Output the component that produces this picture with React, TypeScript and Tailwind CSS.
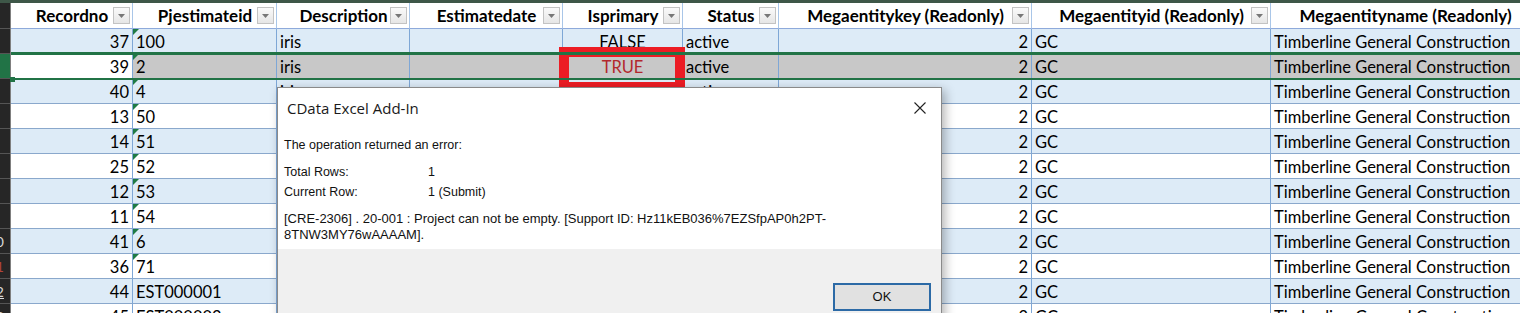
import React from 'react';

type Col = { title: string; w: string; align: string; btn: boolean };

const COLS: Col[] = [
  { title: 'Recordno', w: 'w-[122px]', align: 'justify-end pr-[3px]', btn: true },
  { title: 'Pjestimateid', w: 'w-[144px]', align: 'justify-start pl-[3px]', btn: true },
  { title: 'Description', w: 'w-[133px]', align: 'justify-start pl-[3px]', btn: true },
  { title: 'Estimatedate', w: 'w-[153px]', align: 'justify-start pl-[3px]', btn: true },
  { title: 'Isprimary', w: 'w-[120px]', align: 'justify-center', btn: true },
  { title: 'Status', w: 'w-[96px]', align: 'justify-start pl-[3px]', btn: true },
  { title: 'Megaentitykey (Readonly)', w: 'w-[253px]', align: 'justify-end pr-[3px]', btn: true },
  { title: 'Megaentityid (Readonly)', w: 'w-[239px]', align: 'justify-start pl-[3px]', btn: true },
  { title: 'Megaentityname (Readonly)', w: 'w-[270px]', align: 'justify-start pl-[3px]', btn: false },
];

const NAME = 'Timberline General Construction';
const ids = [
  ['37', '100'], ['39', '2'], ['40', '4'], ['13', '50'], ['14', '51'], ['25', '52'],
  ['12', '53'], ['11', '54'], ['41', '6'], ['36', '71'], ['44', 'EST000001'], ['45', 'EST000002'],
];
const ROWS = ids.map(([r, p], i) => [r, p, 'iris', '', i === 1 ? 'TRUE' : 'FALSE', 'active', '2', 'GC', NAME]);

function Caret() {
  return (
    <div className="w-[17px] h-[17px] shrink-0 flex items-center justify-center border border-[#c3c3c3] bg-gradient-to-b from-[#fafafa] to-[#e6e6e6]">
      <svg width="7" height="4" viewBox="0 0 7 4"><polygon points="0,0 7,0 3.5,4" fill="#777" /></svg>
    </div>
  );
}

function StripCell({ n, sel }: { n: number; sel: boolean }) {
  const color = n === 11 ? 'text-[#b0453a]' : 'text-[#d8d8d8]';
  return (
    <div className={`h-[25px] overflow-hidden border-b border-[#555] flex items-center ${sel ? 'bg-[#217346]' : ''}`}>
      {n >= 10 && (
        <div className={`-ml-[22px] w-[26px] shrink-0 text-right text-[14px] ${color} ${n === 12 ? 'underline' : ''}`}>{n}</div>
      )}
    </div>
  );
}

export default function App() {
  return (
    <div className="relative w-[1520px] h-[313px] overflow-hidden bg-white text-black font-['Lato',sans-serif]">
      <div className="h-[3px] bg-[#3e5748]" />
      <div className="flex">
        <div className="w-[11px] shrink-0 bg-[#262626] border-r border-[#7f7f7f]">
          <div className="h-[26px] border-b border-[#555]" />
          {ROWS.map((_, i) => <StripCell key={i} n={i + 2} sel={i === 1} />)}
        </div>
        <div className="flex flex-col">
          <div className="flex h-[26px]">
            {COLS.map((c, i) => (
              <div key={i} className={`${c.w} shrink-0 flex items-center border-r border-b border-r-[#a9c6e8] border-b-[#8eaadb] bg-white`}>
                <div className="w-[20px] shrink-0" />
                <div className="flex-1 text-center font-bold text-[17px] leading-[20px] pt-[1px] whitespace-nowrap">{c.title}</div>
                {c.btn ? <Caret /> : <div className="w-[20px] shrink-0" />}
                {c.btn && <div className="w-[2px] shrink-0" />}
              </div>
            ))}
          </div>
          {ROWS.map((row, ri) => {
            const sel = ri === 1;
            const band = ri % 2 === 0 ? 'bg-[#ddebf7]' : 'bg-white';
            return (
              <div key={ri} className="relative flex h-[25px]">
                {COLS.map((c, ci) => {
                  const bg = sel ? (ci === 0 ? 'bg-white' : 'bg-[#c8c8c8]') : band;
                  const txt = ci === 4 && row[ci] === 'TRUE' ? 'text-[#b3282d]' : '';
                  return (
                    <div key={ci} className={`${c.w} shrink-0 relative flex items-center pt-[3px] overflow-hidden whitespace-nowrap text-[16.5px] border-r border-b border-r-[#7ea7d6] border-b-[#8aa8cc] ${c.align} ${bg} ${txt}`}>
                      {ci === 1 && /^\d+$/.test(row[1]) && (
                        <svg className="absolute left-0 top-0" width="6" height="6" viewBox="0 0 6 6"><polygon points="0,0 6,0 0,6" fill="#1e7a45" /></svg>
                      )}
                      {row[ci]}
                    </div>
                  );
                })}
                {sel && (
                  <>
                    <div className="absolute z-10 left-0 right-0 -top-[2px] h-[3px] bg-[#217346]" />
                    <div className="absolute z-10 left-[4px] right-0 -bottom-[1px] h-[2px] bg-[#217346]" />
                    <div className="absolute z-10 -left-[1px] -bottom-[3px] w-[5px] h-[5px] bg-[#217346]" />
                  </>
                )}
              </div>
            );
          })}
        </div>
      </div>

      {/* red annotation */}
      <div className="absolute left-[559px] top-[47px] w-[126px] h-[45px] border-[10px] border-[#ec1c24]" />

      {/* dialog */}
      <div className="absolute left-[277px] top-[87px] w-[665px] h-[250px] bg-white border border-[#8a8a8a] shadow-[3px_3px_10px_rgba(0,0,0,0.3)] flex flex-col">
        <div className="h-[40px] flex items-center justify-between pl-[9px] pr-[15px]">
          <span className="font-['Open_Sans',sans-serif] text-[15px] text-[#1a1a1a]">CData Excel Add-In</span>
          <svg width="12" height="12" viewBox="0 0 12 12"><path d="M0.5 0.5 L11.5 11.5 M11.5 0.5 L0.5 11.5" stroke="#222" strokeWidth="1.1" /></svg>
        </div>
        <div className="px-[6px] pb-[6px] font-['Liberation_Sans',sans-serif] text-[12.5px] text-[#111]">
          <p className="mt-[9px] leading-[16px]">The operation returned an error:</p>
          <div className="mt-[9px] grid grid-cols-[144px_1fr]">
            <div className="h-[20px] flex items-center">Total Rows:</div>
            <div className="h-[20px] flex items-center">1</div>
            <div className="h-[20px] flex items-center">Current Row:</div>
            <div className="h-[20px] flex items-center">1 (Submit)</div>
          </div>
          <p className="mt-[9px] leading-[16px] text-[13px]">
            [CRE-2306] . 20-001 : Project can not be empty. [Support ID: Hz11kEB036%7EZSfpAP0h2PT-
            <br />
            8TNW3MY76wAAAAM].
          </p>
        </div>
        <div className="flex-1 bg-[#f0f0f0] flex justify-end items-start pt-[34px] pr-[10px]">
          <button className="w-[98px] h-[28px] bg-[#e1e1e1] border-2 border-[#2c6aa6] font-['Liberation_Sans',sans-serif] text-[13px] text-[#111]">OK</button>
        </div>
      </div>
    </div>
  );
}
